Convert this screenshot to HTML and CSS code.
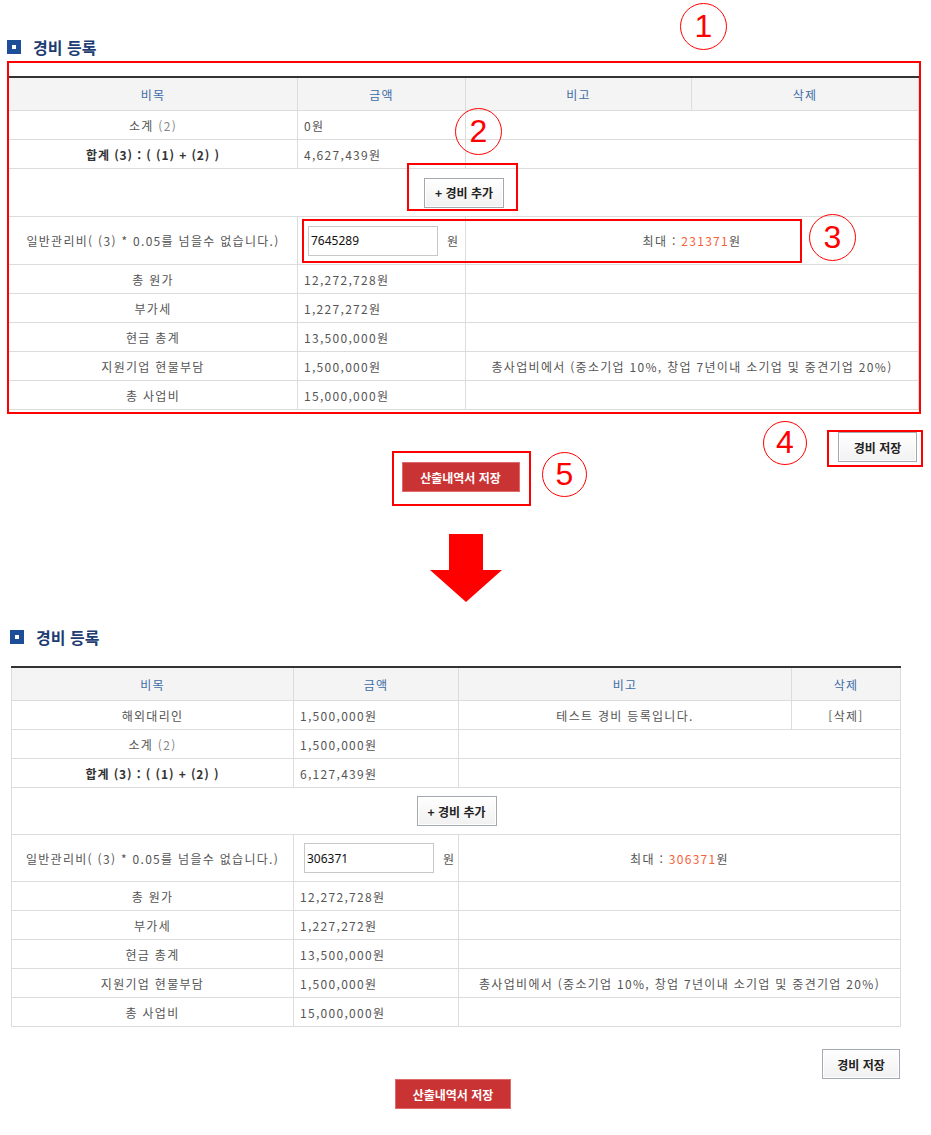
FILE: index.html
```html
<!DOCTYPE html>
<html lang="ko">
<head>
    <meta charset="UTF-8">
    <title>경비 등록</title>
    <link rel="stylesheet" href="styles.css">
</head>
<body>
    <!-- before: empty expense list, with guide marks -->
    <section class="shot shot-before">
        <h2 class="title"><span class="title-icon"></span>경비 등록</h2>

        <table class="cost-table">
            <colgroup>
                <col class="c1"><col class="c2"><col class="c3"><col class="c4">
            </colgroup>
            <tr>
                <th>비목</th><th>금액</th><th>비고</th><th>삭제</th>
            </tr>
            <tr>
                <td class="label">소계 <span class="muted">(2)</span></td>
                <td>0원</td>
                <td colspan="2"></td>
            </tr>
            <tr>
                <td class="label strong">합계 (3) : ( (1) + (2) )</td>
                <td>4,627,439원</td>
                <td colspan="2"></td>
            </tr>
            <tr class="tall">
                <td colspan="4" class="label"><button class="btn btn-add">+ 경비 추가</button></td>
            </tr>
            <tr class="tall">
                <td class="label">일반관리비( (3) * 0.05를 넘을수 없습니다.)</td>
                <td><input class="amount" type="text" value="7645289"><span class="unit">원</span></td>
                <td colspan="2" class="label">최대 : <span class="max-num">231371</span>원</td>
            </tr>
            <tr>
                <td class="label">총 원가</td>
                <td>12,272,728원</td>
                <td colspan="2"></td>
            </tr>
            <tr>
                <td class="label">부가세</td>
                <td>1,227,272원</td>
                <td colspan="2"></td>
            </tr>
            <tr>
                <td class="label">현금 총계</td>
                <td>13,500,000원</td>
                <td colspan="2"></td>
            </tr>
            <tr>
                <td class="label">지원기업 현물부담</td>
                <td>1,500,000원</td>
                <td colspan="2" class="label">총사업비에서 (중소기업 10%, 창업 7년이내 소기업 및 중견기업 20%)</td>
            </tr>
            <tr>
                <td class="label">총 사업비</td>
                <td>15,000,000원</td>
                <td colspan="2"></td>
            </tr>
        </table>

        <div class="actions">
            <button class="btn btn-save">경비 저장</button>
            <button class="btn btn-print">산출내역서 저장</button>
        </div>

        <div class="mark-box box-1"></div>
        <div class="mark-box box-2"></div>
        <div class="mark-box box-3"></div>
        <div class="mark-box box-4"></div>
        <div class="mark-box box-5"></div>
        <div class="mark-num num-1">1</div>
        <div class="mark-num num-2">2</div>
        <div class="mark-num num-3">3</div>
        <div class="mark-num num-4">4</div>
        <div class="mark-num num-5">5</div>
    </section>

    <div class="arrow">
        <svg width="72" height="68" viewBox="0 0 72 68">
            <rect x="19" y="0" width="34" height="38" fill="#ff0000"/>
            <polygon points="0,36 72,36 36,68" fill="#ff0000"/>
        </svg>
    </div>

    <!-- after: one expense added -->
    <section class="shot shot-after">
        <h2 class="title"><span class="title-icon"></span>경비 등록</h2>

        <table class="cost-table">
            <colgroup>
                <col class="c1"><col class="c2"><col class="c3"><col class="c4">
            </colgroup>
            <tr>
                <th>비목</th><th>금액</th><th>비고</th><th>삭제</th>
            </tr>
            <tr>
                <td class="label">해외대리인</td>
                <td>1,500,000원</td>
                <td class="label">테스트 경비 등록입니다.</td>
                <td class="label">[삭제]</td>
            </tr>
            <tr>
                <td class="label">소계 <span class="muted">(2)</span></td>
                <td>1,500,000원</td>
                <td colspan="2"></td>
            </tr>
            <tr>
                <td class="label strong">합계 (3) : ( (1) + (2) )</td>
                <td>6,127,439원</td>
                <td colspan="2"></td>
            </tr>
            <tr class="tall">
                <td colspan="4" class="label"><button class="btn btn-add">+ 경비 추가</button></td>
            </tr>
            <tr class="tall">
                <td class="label">일반관리비( (3) * 0.05를 넘을수 없습니다.)</td>
                <td><input class="amount" type="text" value="306371"><span class="unit">원</span></td>
                <td colspan="2" class="label">최대 : <span class="max-num">306371</span>원</td>
            </tr>
            <tr>
                <td class="label">총 원가</td>
                <td>12,272,728원</td>
                <td colspan="2"></td>
            </tr>
            <tr>
                <td class="label">부가세</td>
                <td>1,227,272원</td>
                <td colspan="2"></td>
            </tr>
            <tr>
                <td class="label">현금 총계</td>
                <td>13,500,000원</td>
                <td colspan="2"></td>
            </tr>
            <tr>
                <td class="label">지원기업 현물부담</td>
                <td>1,500,000원</td>
                <td colspan="2" class="label">총사업비에서 (중소기업 10%, 창업 7년이내 소기업 및 중견기업 20%)</td>
            </tr>
            <tr>
                <td class="label">총 사업비</td>
                <td>15,000,000원</td>
                <td colspan="2"></td>
            </tr>
        </table>

        <div class="actions">
            <button class="btn btn-save">경비 저장</button>
            <button class="btn btn-print">산출내역서 저장</button>
        </div>
    </section>
</body>
</html>
```

FILE: styles.css
```css
body {
    margin: 0;
    font-family: "Noto Sans CJK KR", "Noto Sans", sans-serif;
    font-size: 12px;
    color: #555;
    background: #fff;
}

.shot {
    position: relative;
}

.shot-before {
    margin-left: 8px;
    width: 910px;
    padding-top: 38px;
}

.shot-after {
    margin-left: 11px;
    width: 889px;
    margin-top: 26px;
}

/* section title */
.title {
    display: flex;
    align-items: center;
    gap: 12px;
    height: 18px;
    margin: 0 0 0 -1px;
    font-size: 16px;
    line-height: 18px;
    font-weight: bold;
    color: #1d3d73;
}

.title-icon {
    width: 4px;
    height: 4px;
    border: 5px solid #1d4e97;
    background: #fff;
}

/* table */
.cost-table {
    width: 100%;
    margin-top: 20px;
    border-collapse: collapse;
    table-layout: fixed;
    border-top: 2px solid #333;
    letter-spacing: 1.3px;
}

.shot-before .c1 { width: 289px; }
.shot-before .c2 { width: 168px; }
.shot-before .c3 { width: 226px; }
.shot-before .c4 { width: 227px; }

.shot-after .c1 { width: 282px; }
.shot-after .c2 { width: 165px; }
.shot-after .c3 { width: 333px; }
.shot-after .c4 { width: 109px; }

.cost-table th,
.cost-table td {
    border: 1px solid #dcdcdc;
    height: 28px;
    padding: 0 6px;
    white-space: nowrap;
}

.cost-table th {
    height: 32px;
    background: #f4f4f4;
    color: #3e6ca8;
    font-weight: normal;
}

.cost-table .tall td {
    height: 46px;
}

.shot-before .cost-table .tall td {
    height: 47px;
}

.cost-table td.label {
    text-align: center;
}

.cost-table td.strong {
    font-weight: bold;
    color: #333;
    letter-spacing: 0.9px;
}

.muted {
    color: #888;
}

.max-num {
    color: #f5623a;
}

.amount {
    width: 130px;
    height: 30px;
    box-sizing: border-box;
    margin: 0 0 0 4px;
    padding: 0 2px;
    border: 1px solid #c8c8c8;
    font-family: "Noto Sans", sans-serif;
    font-size: 12px;
    color: #111;
    vertical-align: middle;
}

.unit {
    margin-left: 9px;
    vertical-align: middle;
}

/* buttons */
.btn {
    font-family: "Noto Sans CJK KR", sans-serif;
    font-size: 12px;
    font-weight: bold;
    cursor: pointer;
    padding: 0;
    letter-spacing: 0;
}

.btn-add,
.btn-save {
    height: 30px;
    border: 1px solid #a4a8b0;
    background: linear-gradient(#ffffff, #f1f1f1);
    box-shadow: inset 0 0 0 1px #fff;
    color: #222;
}

.btn-add {
    width: 80px;
    margin-left: 1px;
}

.actions {
    display: flex;
    flex-direction: column;
    margin-top: 22px;
}

.btn-save {
    align-self: flex-end;
    width: 79px;
    margin-right: 1px;
}

.btn-print {
    align-self: center;
    width: 118px;
    height: 30px;
    margin-right: 5px;
    border: 1px solid #de6b6b;
    background: #c93333;
    color: #fff;
}

.shot-after .btn-save {
    width: 78px;
    margin-right: 0;
}

.shot-after .btn-print {
    width: 116px;
}

/* the arrow between the two screens */
.arrow {
    display: flex;
    justify-content: center;
    margin-top: 42px;
}

.arrow svg {
    display: block;
    margin-left: 1px;
}

/* guide marks drawn over the first screen */
.mark-box {
    position: absolute;
    box-sizing: border-box;
    border: 2px solid #ff0000;
}

.box-1 { left: -1px; top: 61px; width: 914px; height: 353px; }
.box-2 { left: 399px; top: 163px; width: 111px; height: 48px; }
.box-3 { left: 294px; top: 219px; width: 500px; height: 44px; }
.box-4 { left: 819px; top: 430px; width: 96px; height: 37px; }
.box-5 { left: 384px; top: 451px; width: 139px; height: 55px; }

.mark-num {
    position: absolute;
    box-sizing: border-box;
    width: 47px;
    height: 47px;
    border: 1.5px solid #ff0000;
    border-radius: 50%;
    font-family: "Liberation Sans", Arial, sans-serif;
    font-size: 32px;
    line-height: 44px;
    text-align: center;
    color: #ff0000;
}

.num-1 { left: 672px; top: 3px; }
.num-2 { left: 447px; top: 108px; }
.num-3 { left: 801px; top: 214px; }
.num-4 { left: 755px; top: 421px; width: 44px; height: 44px; line-height: 41px; }
.num-5 { left: 534px; top: 452px; width: 45px; height: 45px; line-height: 42px; }
```
